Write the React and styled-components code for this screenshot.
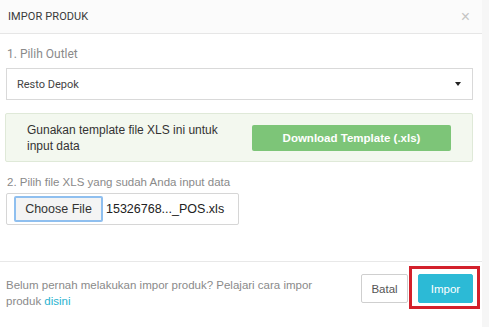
import React from 'react';
import styled, { createGlobalStyle } from 'styled-components';

const GlobalStyle = createGlobalStyle`
  html, body {
    margin: 0;
    padding: 0;
    background: #f6f6f6;
    font-family: "Liberation Sans", Arial, sans-serif;
  }
`;

const Modal = styled.div`
  width: 482px;
  height: 327px;
  background: #fff;
  display: flex;
  flex-direction: column;
`;

const Header = styled.div`
  height: 34px;
  box-sizing: border-box;
  display: flex;
  align-items: center;
  justify-content: space-between;
  padding: 0 12px 0 8px;
  background: #fbfbfb;
  border-bottom: 1px solid #e6e6e6;
`;

const Title = styled.div`
  font-family: Roboto, sans-serif;
  font-size: 11px;
  color: #3a3a3a;
  letter-spacing: 0.1px;
`;

const Close = styled.span`
  font-family: "Liberation Sans", sans-serif;
  font-size: 16px;
  color: #c4c4c4;
  line-height: 1;
`;

const Body = styled.div`
  padding: 13px 9px 0 6px;
  display: flex;
  flex-direction: column;
  flex: 1;
`;

const Label = styled.div`
  font-family: ${p => (p.roboto ? 'Roboto, sans-serif' : '"Liberation Sans", sans-serif')};
  font-size: ${p => (p.roboto ? '12px' : '11.5px')};
  color: #8a8a8a;
  margin-left: 1px;
  margin-bottom: ${p => p.gap || 6}px;
`;

const Select = styled.div`
  height: 32px;
  box-sizing: border-box;
  border: 1px solid #d9d9d9;
  display: flex;
  align-items: center;
  justify-content: space-between;
  padding: 0 11px 0 10px;
  font-family: Roboto, sans-serif;
  font-size: 11px;
  color: #444;
`;

const Caret = styled.span`
  width: 0;
  height: 0;
  border-left: 3px solid transparent;
  border-right: 3px solid transparent;
  border-top: 4px solid #222;
`;

const Alert = styled.div`
  margin: 13px 0 14px -1px;
  height: 49px;
  box-sizing: border-box;
  background: #f3f8ef;
  border: 1px solid #dfe9d8;
  border-radius: 2px;
  display: flex;
  align-items: center;
  padding: 0 21px 0 21px;
  gap: 30px;
`;

const AlertText = styled.div`
  width: 195px;
  font-size: 12px;
  line-height: 16px;
  color: #333;
`;

const GreenButton = styled.div`
  flex: 1;
  height: 26px;
  background: #7dc578;
  border-radius: 2px;
  color: #fff;
  font-size: 11.5px;
  font-weight: bold;
  display: flex;
  align-items: center;
  justify-content: center;
`;

const FileBox = styled.div`
  width: 233px;
  height: 32px;
  box-sizing: border-box;
  border: 1px solid #d6d6d6;
  border-radius: 2px;
  display: flex;
  align-items: center;
  padding-left: 7px;
  gap: 3px;
  font-size: 12.5px;
  color: #222;
`;

const ChooseButton = styled.div`
  width: 89px;
  height: 26px;
  box-sizing: border-box;
  border: 2px solid #8fbfef;
  border-radius: 2px;
  background: #f4f4f4;
  display: flex;
  align-items: center;
  justify-content: center;
  font-size: 12.5px;
  color: #333;
`;

const Footer = styled.div`
  height: 66px;
  border-top: 1px solid #e8e8e8;
  display: flex;
  align-items: flex-start;
  justify-content: space-between;
  padding: 12px 9px 0 6px;
  box-sizing: border-box;
`;

const FooterText = styled.div`
  width: 310px;
  font-size: 11.5px;
  line-height: 16px;
  color: #8a8a8a;
  margin-top: 3px;
`;

const Link = styled.a`
  color: #2ab3d0;
  text-decoration: none;
`;

const Actions = styled.div`
  display: flex;
  gap: 10px;
`;

const Button = styled.div`
  position: relative;
  width: ${p => (p.primary ? 55 : 47)}px;
  height: 29px;
  box-sizing: border-box;
  border-radius: 2px;
  display: flex;
  align-items: center;
  justify-content: center;
  font-size: 11.5px;
  background: ${p => (p.primary ? '#2cbad6' : '#fff')};
  color: ${p => (p.primary ? '#fff' : '#555')};
  border: 1px solid ${p => (p.primary ? '#2cbad6' : '#cfcfcf')};
  ${p => p.highlighted && `
    &::after {
      content: "";
      position: absolute;
      top: -9px;
      bottom: -7px;
      left: -10px;
      right: -8px;
      border: 3px solid #d3202b;
    }
  `}
`;

export default function App() {
  return (
    <>
      <GlobalStyle />
      <Modal>
        <Header>
          <Title>IMPOR PRODUK</Title>
          <Close>×</Close>
        </Header>
        <Body>
          <Label roboto gap={7}>1. Pilih Outlet</Label>
          <Select>
            <span>Resto Depok</span>
            <Caret />
          </Select>
          <Alert>
            <AlertText>Gunakan template file XLS ini untuk input data</AlertText>
            <GreenButton>Download Template (.xls)</GreenButton>
          </Alert>
          <Label gap={5}>2. Pilih file XLS yang sudah Anda input data</Label>
          <FileBox>
            <ChooseButton>Choose File</ChooseButton>
            <span>15326768..._POS.xls</span>
          </FileBox>
        </Body>
        <Footer>
          <FooterText>
            Belum pernah melakukan impor produk? Pelajari cara impor produk <Link href="#">disini</Link>
          </FooterText>
          <Actions>
            <Button>Batal</Button>
            <Button primary highlighted>Impor</Button>
          </Actions>
        </Footer>
      </Modal>
    </>
  );
}
